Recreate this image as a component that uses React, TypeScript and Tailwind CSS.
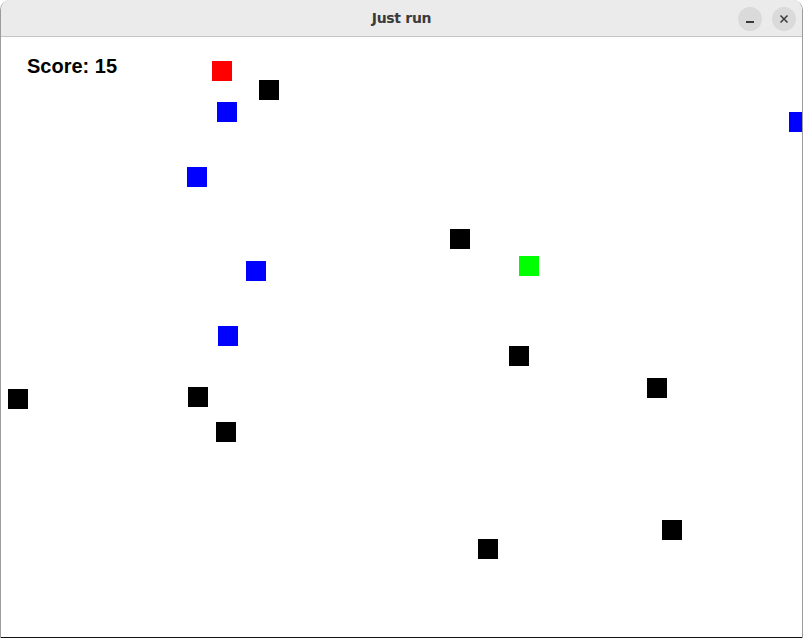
import React from "react";

type Block = { x: number; y: number; color: string };

// positions are relative to the canvas (below the title bar)
const blocks: Block[] = [
    { x: 212, y: 24, color: "bg-[#ff0000]" },
    { x: 259, y: 43, color: "bg-black" },
    { x: 217, y: 65, color: "bg-[#0000ff]" },
    { x: 789, y: 75, color: "bg-[#0000ff]" },
    { x: 187, y: 130, color: "bg-[#0000ff]" },
    { x: 450, y: 192, color: "bg-black" },
    { x: 519, y: 219, color: "bg-[#00ff00]" },
    { x: 246, y: 224, color: "bg-[#0000ff]" },
    { x: 218, y: 289, color: "bg-[#0000ff]" },
    { x: 509, y: 309, color: "bg-black" },
    { x: 647, y: 341, color: "bg-black" },
    { x: 8, y: 352, color: "bg-black" },
    { x: 188, y: 350, color: "bg-black" },
    { x: 216, y: 385, color: "bg-black" },
    { x: 662, y: 483, color: "bg-black" },
    { x: 478, y: 502, color: "bg-black" },
];

export default function App() {
    return (
        <div className="w-[803px] h-[638px] bg-white overflow-hidden">
            <div className="w-[803px] h-[638px] flex flex-col rounded-t-[10px] border-x border-[#9c9c9c] overflow-hidden bg-white">
                {/* Title bar */}
                <div className="h-[37px] shrink-0 flex items-center bg-[#ebebeb] border-b border-[#c4c4c4] relative">
                    <div className="flex-1 text-center text-[14px] font-bold text-[#3a3a3a] font-['DejaVu_Sans',sans-serif] tracking-[-0.3px]">
                        Just run
                    </div>
                    <div className="absolute right-[6px] top-[7px] flex gap-[10px]">
                        <div className="w-[24px] h-[24px] rounded-full bg-[#dadada] flex items-center justify-center">
                            <div className="w-[8px] h-[1.5px] bg-[#3a3a3a] mt-[6px]" />
                        </div>
                        <div className="w-[24px] h-[24px] rounded-full bg-[#dadada] flex items-center justify-center">
                            <svg width="10" height="10" viewBox="0 0 10 10">
                                <path d="M1.5 1.5 L8.5 8.5 M8.5 1.5 L1.5 8.5" stroke="#3a3a3a" strokeWidth="1.5" />
                            </svg>
                        </div>
                    </div>
                </div>

                {/* Game canvas */}
                <div className="relative flex-1 bg-white border-b border-[#111]">
                    <div className="pl-[26px] pt-[17px] text-[20px] font-bold text-black font-['Liberation_Sans',Arial,sans-serif] leading-[24px]">
                        Score: 15
                    </div>
                    {blocks.map((b, i) => (
                        <div
                            key={i}
                            className={`absolute w-[20px] h-[20px] ${b.color}`}
                            style={{ left: b.x - 1, top: b.y }}
                        />
                    ))}
                </div>
            </div>
        </div>
    );
}
